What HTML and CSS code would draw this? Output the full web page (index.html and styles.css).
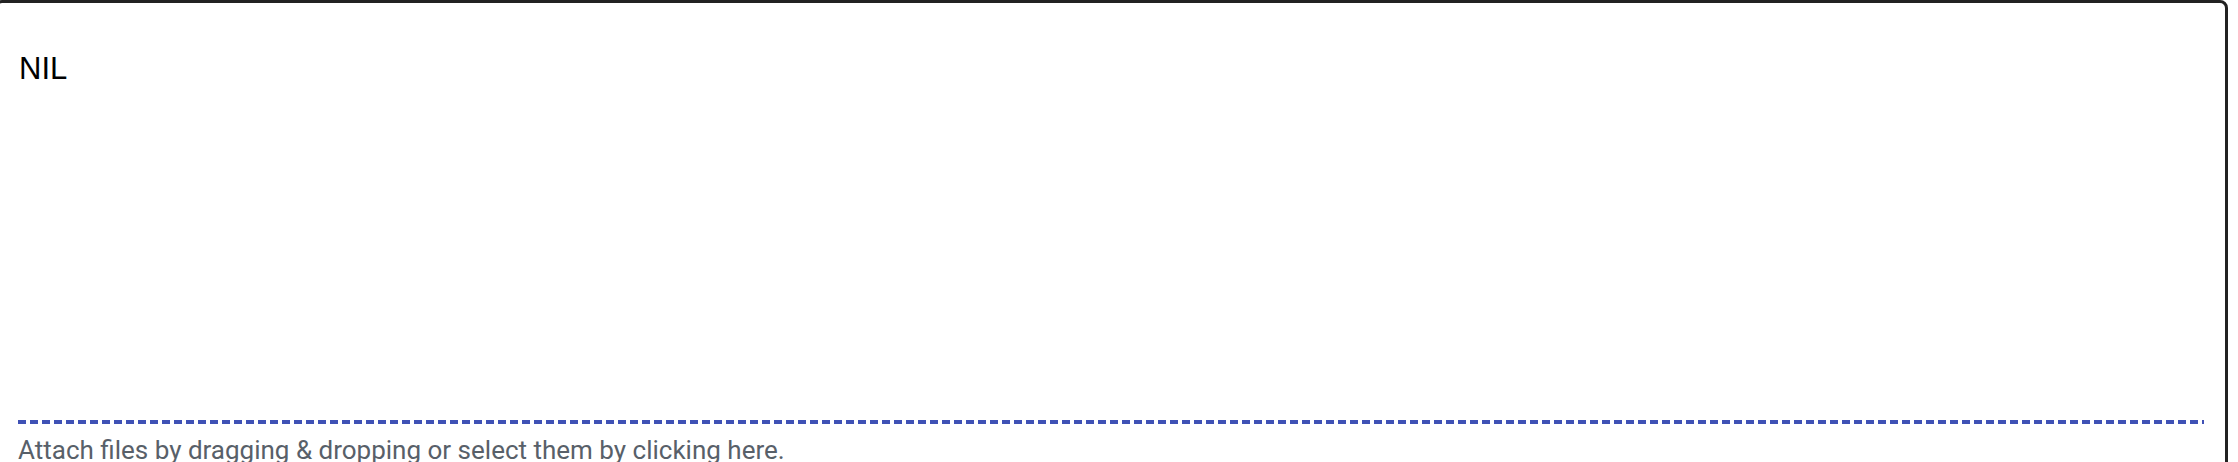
FILE: index.html
```html
<!DOCTYPE html>
<html>
<head>
<meta charset="utf-8">
<link rel="stylesheet" href="styles.css">
</head>
<body>
<div class="card">
  <div class="editor">
    <div class="content">NIL</div>
  </div>
  <div class="dropzone">
    <div class="dash"></div>
    <div class="hint">Attach files by dragging &amp; dropping or select them by clicking here.</div>
  </div>
</div>
</body>
</html>
```
FILE: styles.css
```css
html, body {
  margin: 0;
  padding: 0;
  background: #ffffff;
  overflow: hidden;
}
.card {
  margin-left: -6px;
  width: 2234px;
  box-sizing: border-box;
  height: 600px;
  border: 3px solid #222222;
  border-radius: 8px;
  background: #ffffff;
  display: flex;
  flex-direction: column;
  padding: 0 21px;
}
.editor {
  height: 417px;
  box-sizing: border-box;
  padding-top: 48px;
  padding-left: 1px;
}
.content {
  font-family: "Liberation Sans", Arial, sans-serif;
  font-size: 31px;
  line-height: 36px;
  color: #000000;
}
.dash {
  height: 4px;
  background-image: linear-gradient(to right, #3f51b5 0 8px, transparent 8px 12px);
  background-size: 12px 4px;
  background-repeat: repeat-x;
}
.hint {
  margin-top: 11px;
  font-family: Roboto, "Noto Sans", sans-serif;
  font-size: 26px;
  line-height: 30px;
  color: #586069;
}
```
